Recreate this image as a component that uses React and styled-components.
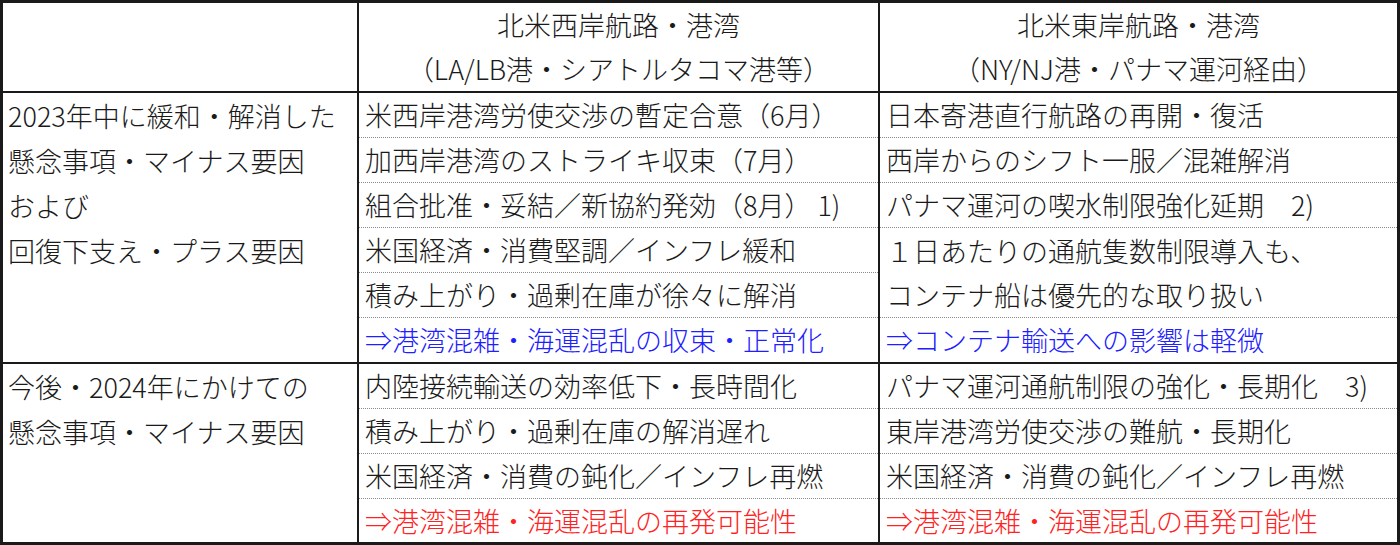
import React from "react";
import styled, { createGlobalStyle } from "styled-components";

const GlobalStyle = createGlobalStyle`
  html, body {
    margin: 0;
    padding: 0;
    background: #ffffff;
  }
  body {
    font-family: "Noto Sans CJK JP", "Noto Sans", sans-serif;
    color: #1a1a1a;
  }
`;

const Frame = styled.div`
  box-sizing: border-box;
  width: 1400px;
  height: 545px;
  border: 3px solid #1a1a1a;
  overflow: hidden;
`;

const Table = styled.table`
  width: 100%;
  border-collapse: collapse;
  border-style: hidden;
  table-layout: fixed;
  font-size: 27px;
  font-weight: 300;
`;

const HeadRow = styled.tr`
  height: 89px;
`;

const SubRow = styled.tr`
  height: 45px;
`;

const Cell = styled.td`
  padding: 0 6px;
  line-height: 44px;
  white-space: nowrap;
  vertical-align: ${({ $top }) => ($top ? "top" : "middle")};
  text-align: ${({ $center }) => ($center ? "center" : "left")};
  color: ${({ $tone }) =>
    $tone === "blue" ? "#2020ff" : $tone === "red" ? "#ff2222" : "#1a1a1a"};
  border-left: 2px solid #1a1a1a;
  border-right: 2px solid #1a1a1a;
  border-top: ${({ $solid }) => ($solid ? "2px solid #1a1a1a" : "1px dotted #8a8a8a")};
  border-bottom: none;
`;

const LabelCell = styled(Cell)`
  padding: 0 5px;
  line-height: 45px;
`;

const Line = styled.div``;

const firstBlock = [
  ["米西岸港湾労使交渉の暫定合意（6月）", "日本寄港直行航路の再開・復活"],
  ["加西岸港湾のストライキ収束（7月）", "西岸からのシフト一服／混雑解消"],
  ["組合批准・妥結／新協約発効（8月） 1)", "パナマ運河の喫水制限強化延期　2)"],
  ["米国経済・消費堅調／インフレ緩和", ["１日あたりの通航隻数制限導入も、", "コンテナ船は優先的な取り扱い"]],
  ["積み上がり・過剰在庫が徐々に解消", null],
  ["⇒港湾混雑・海運混乱の収束・正常化", "⇒コンテナ輸送への影響は軽微", "blue"],
];

const secondBlock = [
  ["内陸接続輸送の効率低下・長時間化", "パナマ運河通航制限の強化・長期化　3)"],
  ["積み上がり・過剰在庫の解消遅れ", "東岸港湾労使交渉の難航・長期化"],
  ["米国経済・消費の鈍化／インフレ再燃", "米国経済・消費の鈍化／インフレ再燃"],
  ["⇒港湾混雑・海運混乱の再発可能性", "⇒港湾混雑・海運混乱の再発可能性", "red"],
];

function Block({ rows, label }) {
  return rows.map(([west, east, tone], i) => {
    const first = i === 0;
    return (
      <SubRow key={i}>
        {first && (
          <LabelCell rowSpan={rows.length} $top $solid>
            {label.map((l) => (
              <Line key={l}>{l}</Line>
            ))}
          </LabelCell>
        )}
        <Cell $tone={tone} $solid={first}>
          {west}
        </Cell>
        {Array.isArray(east) ? (
          <Cell rowSpan={2} $tone={tone}>
            {east.map((l) => (
              <Line key={l}>{l}</Line>
            ))}
          </Cell>
        ) : east !== null ? (
          <Cell $tone={tone} $solid={first}>
            {east}
          </Cell>
        ) : null}
      </SubRow>
    );
  });
}

export default function App() {
  return (
    <>
      <GlobalStyle />
      <Frame>
        <Table>
          <colgroup>
            <col style={{ width: 355 }} />
            <col style={{ width: 521 }} />
            <col style={{ width: 518 }} />
          </colgroup>
          <tbody>
            <HeadRow>
              <Cell />
              <Cell $center>
                <Line>北米西岸航路・港湾</Line>
                <Line>（LA/LB港・シアトルタコマ港等）</Line>
              </Cell>
              <Cell $center>
                <Line>北米東岸航路・港湾</Line>
                <Line>（NY/NJ港・パナマ運河経由）</Line>
              </Cell>
            </HeadRow>
            <Block
              rows={firstBlock}
              label={["2023年中に緩和・解消した", "懸念事項・マイナス要因", "および", "回復下支え・プラス要因"]}
            />
            <Block rows={secondBlock} label={["今後・2024年にかけての", "懸念事項・マイナス要因"]} />
          </tbody>
        </Table>
      </Frame>
    </>
  );
}
